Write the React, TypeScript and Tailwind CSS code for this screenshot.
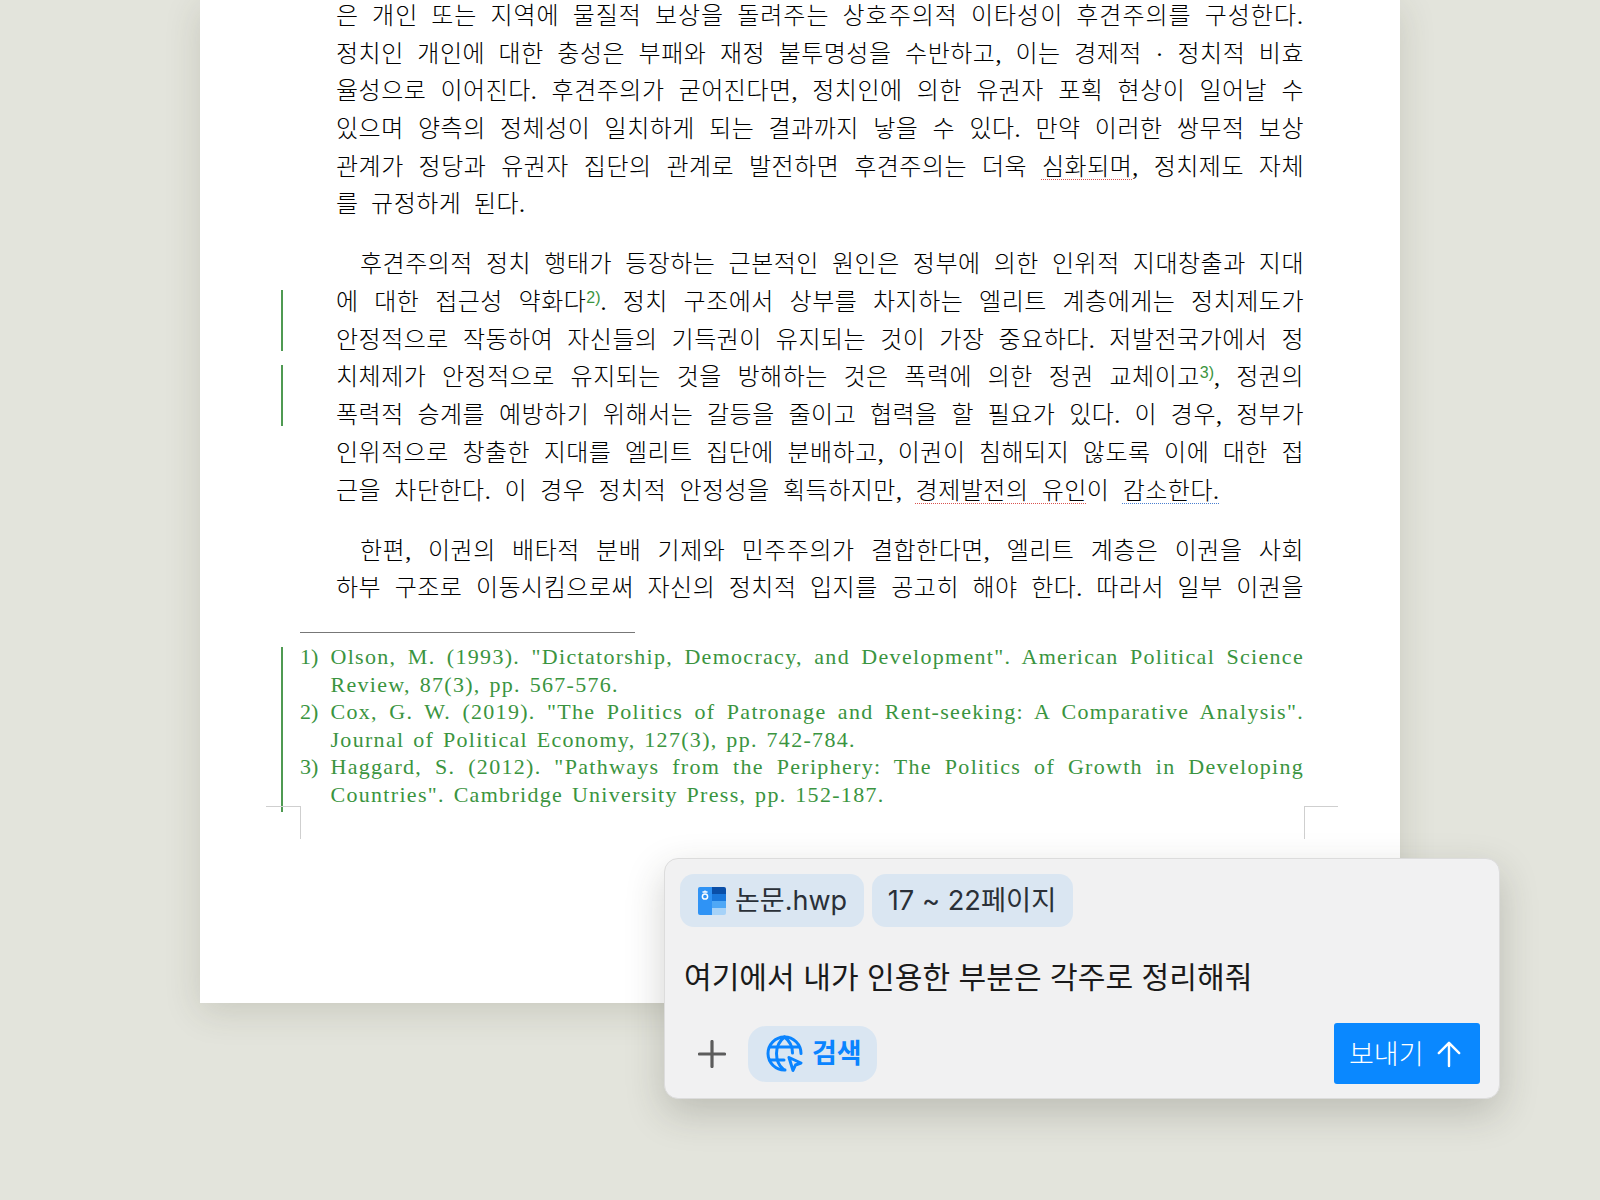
import React from "react";

const J = "block h-[37.7px] leading-[37.7px] [text-align:justify] [text-align-last:justify]";
const L = "block h-[37.7px] leading-[37.7px]";
const Sup = ({ children }: { children: React.ReactNode }) => (
  <span className="relative -top-[7px] text-[16px] leading-none tracking-normal text-[#3a9440] [font-family:'Liberation_Sans',sans-serif]">{children}</span>
);
const Red = ({ children }: { children: React.ReactNode }) => (
  <span className="underline decoration-dotted decoration-[#d9534f] decoration-1 underline-offset-[4px] [text-decoration-skip-ink:none]">{children}</span>
);
const Blue = ({ children }: { children: React.ReactNode }) => (
  <span className="underline decoration-dotted decoration-[#4a7fd0] decoration-1 underline-offset-[4px] [text-decoration-skip-ink:none]">{children}</span>
);

const F = "block h-[27.5px] leading-[27.5px] [text-align:justify] [text-align-last:justify]";
const FL = "block h-[27.5px] leading-[27.5px] [word-spacing:2px]";

function Note({ n, a, b }: { n: string; a: string; b: string }) {
  return (
    <div className="flex">
      <div className="w-[30.5px] shrink-0 h-[27.5px] leading-[27.5px]">{n}</div>
      <div className="flex-1 min-w-0 tracking-[1.3px]">
        <div className={F}>{a}</div>
        <div className={FL}>{b}</div>
      </div>
    </div>
  );
}

function GlobeCursor() {
  return (
    <svg width="37" height="37" viewBox="0 0 37 37" fill="none" stroke="#0a84ff" strokeWidth="3" strokeLinecap="round" strokeLinejoin="round">
      <path d="M19 35 A16.5 16.5 0 1 1 35 18.5" />
      <path d="M18.5 2 C12 7 10.5 13 10.5 18.5 C10.5 24 12 30 17.5 34.5" />
      <path d="M18.5 2 C25 7 26.5 13 26.5 18" />
      <path d="M4 12 H33" />
      <path d="M4 25 H18" />
      <path d="M23 22.5 L35 28 L29.5 30 L27 35.5 Z" fill="#dae6f2" />
    </svg>
  );
}

function HwpIcon() {
  return (
    <svg width="28" height="28" viewBox="0 0 28 28">
      <rect x="0" y="0" width="14" height="28" rx="2" fill="#2f93f5" />
      <path d="M12 0 H26 a2 2 0 0 1 2 2 V7 H12 Z" fill="#0a4fa8" />
      <rect x="14" y="7" width="14" height="7" fill="#1a78dc" />
      <rect x="14" y="14" width="14" height="7" fill="#4fa8f6" />
      <path d="M14 21 H28 V26 a2 2 0 0 1 -2 2 H14 Z" fill="#a6d2f8" />
      <path d="M12 0 h2 v28 h-2 z" fill="#2f93f5" />
      <circle cx="7" cy="9.5" r="2.6" fill="none" stroke="#fff" strokeWidth="1.5" />
      <path d="M4.5 5 H9.5 M7 3.5 V5" stroke="#fff" strokeWidth="1.3" fill="none" />
    </svg>
  );
}

export default function App() {
  return (
    <div className="relative h-[1200px] w-[1600px] overflow-hidden bg-[#e3e4dc]">
      <div className="relative ml-[200px] h-[1003px] w-[1200px] bg-white shadow-[0_8px_34px_rgba(60,60,40,0.16)]">
        <div className="h-full overflow-hidden">
          <div className="-mt-[2px] pl-[136px] pr-[96px] text-[24px] font-light tracking-[0.5px] text-black [font-family:'Liberation_Serif','Noto_Sans_CJK_KR',serif]">
            <div>
              <span className={`${J} tracking-[1px]`}>은 개인 또는 지역에 물질적 보상을 돌려주는 상호주의적 이타성이 후견주의를 구성한다.</span>
              <span className={J}>정치인 개인에 대한 충성은 부패와 재정 불투명성을 수반하고, 이는 경제적 · 정치적 비효</span>
              <span className={J}>율성으로 이어진다. 후견주의가 굳어진다면, 정치인에 의한 유권자 포획 현상이 일어날 수</span>
              <span className={J}>있으며 양측의 정체성이 일치하게 되는 결과까지 낳을 수 있다. 만약 이러한 쌍무적 보상</span>
              <span className={J}>관계가 정당과 유권자 집단의 관계로 발전하면 후견주의는 더욱 <Red>심화되며</Red>, 정치제도 자체</span>
              <span className={`${L} [word-spacing:6px]`}>를 규정하게 된다.</span>
            </div>
            <div className="mt-[22.3px]">
              <span className={`${J} pl-[24px]`}>후견주의적 정치 행태가 등장하는 근본적인 원인은 정부에 의한 인위적 지대창출과 지대</span>
              <span className={J}>에 대한 접근성 약화다<Sup>2)</Sup>. 정치 구조에서 상부를 차지하는 엘리트 계층에게는 정치제도가</span>
              <span className={J}>안정적으로 작동하여 자신들의 기득권이 유지되는 것이 가장 중요하다. 저발전국가에서 정</span>
              <span className={J}>치체제가 안정적으로 유지되는 것을 방해하는 것은 폭력에 의한 정권 교체이고<Sup>3)</Sup>, 정권의</span>
              <span className={J}>폭력적 승계를 예방하기 위해서는 갈등을 줄이고 협력을 할 필요가 있다. 이 경우, 정부가</span>
              <span className={J}>인위적으로 창출한 지대를 엘리트 집단에 분배하고, 이권이 침해되지 않도록 이에 대한 접</span>
              <span className={`${L} [word-spacing:6.7px]`}>근을 차단한다. 이 경우 정치적 안정성을 획득하지만, <Red>경제발전의 유인</Red>이 <Blue>감소한다.</Blue></span>
            </div>
            <div className="mt-[22.3px]">
              <span className={`${J} pl-[24px]`}>한편, 이권의 배타적 분배 기제와 민주주의가 결합한다면, 엘리트 계층은 이권을 사회</span>
              <span className={J}>하부 구조로 이동시킴으로써 자신의 정치적 입지를 공고히 해야 한다. 따라서 일부 이권을</span>
            </div>
          </div>

          <div className="ml-[100px] mt-[24.5px] h-px w-[335px] bg-[#777]" />

          <div className="ml-[100px] mr-[96px] mt-[10px] text-[22px] text-[#3a9440] [font-family:'Liberation_Serif','Noto_Sans_CJK_KR',serif]">
            <Note n="1)" a={'Olson, M. (1993). "Dictatorship, Democracy, and Development". American Political Science'} b="Review, 87(3), pp. 567-576." />
            <Note n="2)" a={'Cox, G. W. (2019). "The Politics of Patronage and Rent-seeking: A Comparative Analysis".'} b="Journal of Political Economy, 127(3), pp. 742-784." />
            <Note n="3)" a={'Haggard, S. (2012). "Pathways from the Periphery: The Politics of Growth in Developing'} b={'Countries". Cambridge University Press, pp. 152-187.'} />
          </div>
        </div>

        {/* change bars */}
        <div className="absolute left-[81px] top-[290px] h-[61px] w-[2px] bg-[#4f9a52]" />
        <div className="absolute left-[81px] top-[365px] h-[61px] w-[2px] bg-[#4f9a52]" />
        <div className="absolute left-[81px] top-[647px] h-[165px] w-[2px] bg-[#4f9a52]" />
        {/* crop marks */}
        <div className="absolute left-[66px] top-[806px] h-[33px] w-[35px] border-r border-t border-[#cfcfcf]" />
        <div className="absolute left-[1104px] top-[806px] h-[33px] w-[34px] border-l border-t border-[#cfcfcf]" />
      </div>

      <div className="absolute left-[664px] top-[858px] flex h-[241px] w-[836px] flex-col rounded-[14px] border border-[#dcdcdc] bg-[#f1f1f2] px-[15px] pt-[15px] shadow-[0_14px_38px_rgba(50,50,40,0.22)] [font-family:'Inter','Noto_Sans_CJK_KR',sans-serif]">
        <div className="flex gap-[7.5px] text-[27.3px] text-[#2a3038]">
          <div className="flex h-[53px] w-[184px] items-center gap-[9px] rounded-[14px] bg-[#dae6f2] pl-[18px] text-[27px]">
            <HwpIcon />
            <span className="mt-[1px]">논문.hwp</span>
          </div>
          <div className="flex h-[53px] w-[201px] items-center justify-center rounded-[14px] bg-[#dae6f2] pt-[2px]">
            17 ~ 22페이지
          </div>
        </div>
        <div className="ml-[4px] mt-[30px] h-[40px] text-[30.1px] leading-[40px] text-[#1a1a1a]">여기에서 내가 인용한 부분은 각주로 정리해줘</div>
        <div className="mt-[26px] flex items-center pr-[4px]">
          <svg className="ml-[18px]" width="28" height="28" viewBox="0 0 28 28" stroke="#5c5c5c" strokeWidth="3.2" strokeLinecap="round">
            <path d="M1.5 14 H26.5 M14 1.5 V26.5" />
          </svg>
          <div className="ml-[22px] flex h-[56px] w-[129px] items-center gap-[8px] rounded-[18px] bg-[#dae6f2] pl-[18px] text-[27px] font-bold text-[#0a84ff]">
            <GlobeCursor />
            <span className="ml-[1px] mt-[1px]">검색</span>
          </div>
          <div className="ml-auto flex h-[61px] w-[146px] items-center gap-[12px] rounded-[3px] bg-[#0a88ff] pl-[15px] text-[27px] font-light text-white">
            <span className="mt-[3px]">보내기</span>
            <svg width="26" height="28" viewBox="0 0 28 30" fill="none" stroke="#fff" strokeWidth="2.6" strokeLinecap="round" strokeLinejoin="round">
              <path d="M14 28 V3 M3 14 L14 3 L25 14" />
            </svg>
          </div>
        </div>
      </div>
    </div>
  );
}
